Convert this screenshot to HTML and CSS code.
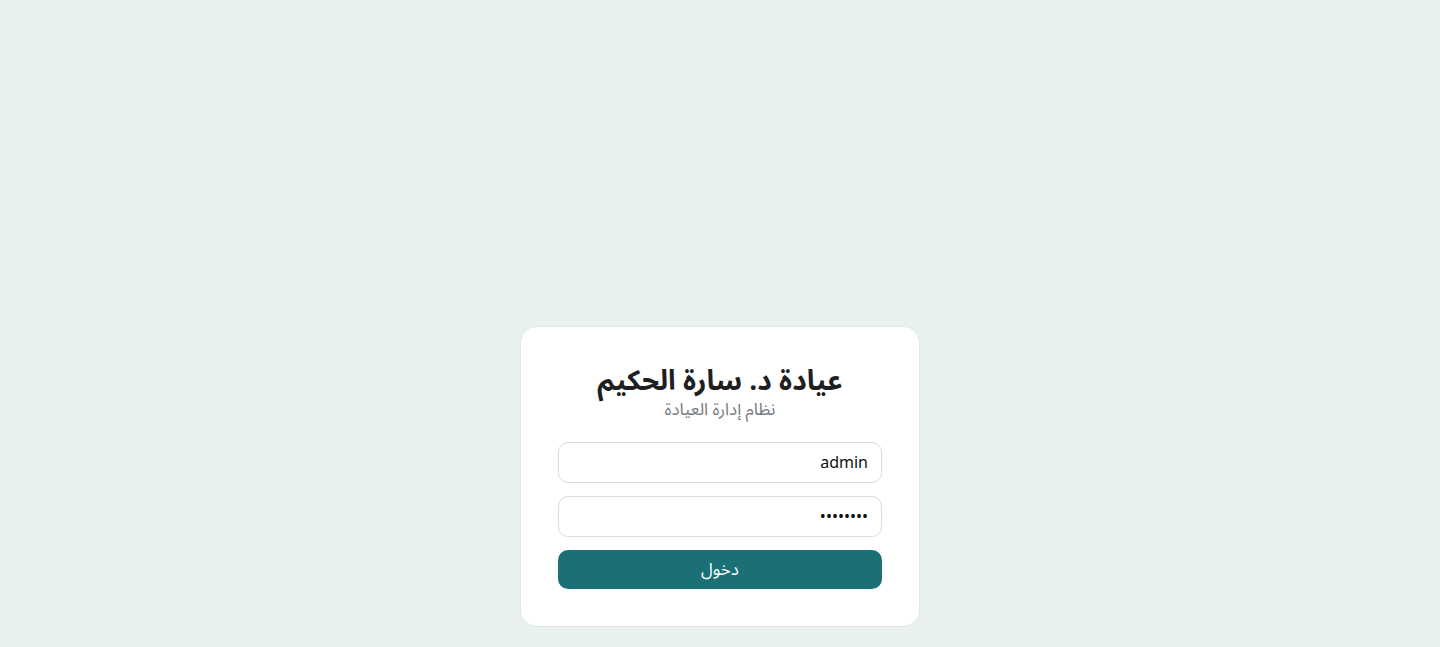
FILE: index.html
```html
<!DOCTYPE html>
<html lang="ar" dir="rtl">
<head>
<meta charset="utf-8">
<title>عيادة د. سارة الحكيم</title>
<link rel="stylesheet" href="styles.css">
</head>
<body>
<main class="page">
  <form class="card">
    <h1 class="title">عيادة د. سارة الحكيم</h1>
    <p class="subtitle">نظام إدارة العيادة</p>
    <input class="field" type="text" value="admin">
    <input class="field" type="password" value="12345678">
    <button class="btn" type="button">دخول</button>
  </form>
</main>
</body>
</html>
```
FILE: styles.css
```css
* { box-sizing: border-box; }
html, body { margin: 0; padding: 0; }
body {
  background: #e8f1f0;
  font-family: "Noto Sans Arabic", "Noto Sans", "DejaVu Sans", sans-serif;
  height: 647px;
  overflow: hidden;
}
.page {
  display: flex;
  justify-content: center;
  padding-top: 326px;
}
.card {
  width: 400px;
  background: #fff;
  border: 1px solid #e0e7e7;
  border-radius: 16px;
  padding: 37px;
  display: flex;
  flex-direction: column;
  text-align: center;
}
.title {
  margin: 0;
  font-size: 28px;
  line-height: 36px;
  font-weight: 700;
  color: #1d1f21;
}
.subtitle {
  margin: 0 0 22px;
  font-size: 17px;
  line-height: 20px;
  color: #767b80;
}
.field {
  height: 41px;
  margin: 0 0 13px;
  border: 1px solid #d8dcdc;
  border-radius: 10px;
  padding: 0 13px;
  font-family: inherit;
  font-size: 16px;
  color: #111;
  text-align: right;
  direction: rtl;
  background: #fff;
  outline: none;
}
.btn {
  height: 39px;
  border: 0;
  border-radius: 10px;
  background: #1b6f76;
  color: #fff;
  font-family: inherit;
  font-size: 17px;
  cursor: pointer;
}
```
